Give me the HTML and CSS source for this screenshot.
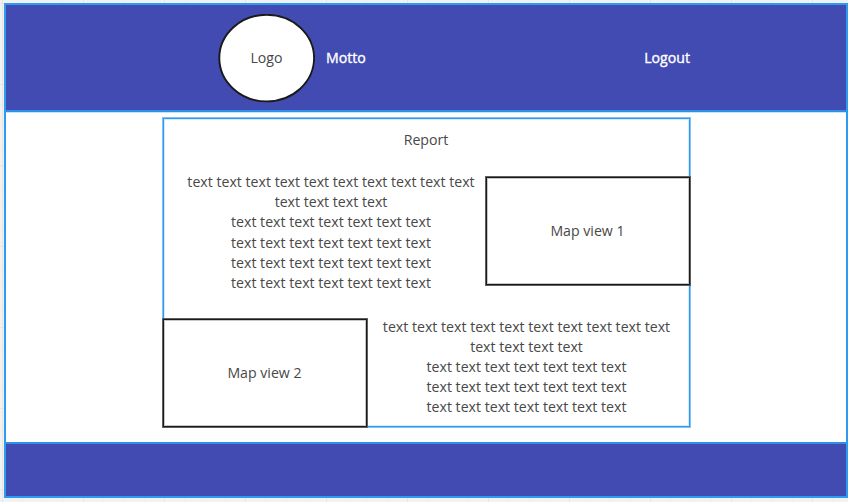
FILE: index.html
```html
<!DOCTYPE html>
<html lang="en">
<head>
<meta charset="utf-8">
<title>Report</title>
<link rel="stylesheet" href="styles.css">
</head>
<body>
<div class="frame">
  <header class="header">
    <div class="logo">
      <svg class="logo-shape" viewBox="0 0 97 89"><ellipse cx="48.7" cy="44.1" rx="47.4" ry="43.3"/></svg>
      <span>Logo</span>
    </div>
    <span class="motto">Motto</span>
    <a class="logout">Logout</a>
  </header>
  <main class="content">
    <section class="report">
      <h1 class="title">Report</h1>
      <div class="row row-first">
        <p class="copy">text text text text text text text text text text<br>text text text text<br>text text text text text text text<br>text text text text text text text<br>text text text text text text text<br>text text text text text text text</p>
        <div class="map">Map view 1</div>
      </div>
      <div class="row row-second">
        <div class="map">Map view 2</div>
        <p class="copy">text text text text text text text text text text<br>text text text text<br>text text text text text text text<br>text text text text text text text<br>text text text text text text text</p>
      </div>
    </section>
  </main>
  <footer class="footer"></footer>
</div>
</body>
</html>
```
FILE: styles.css
```css
* { box-sizing: border-box; }

body {
  margin: 0;
  height: 502px;
  padding: 3px 0 0 4px;
  overflow: hidden;
  font: 14.15px/20.15px "Open Sans", sans-serif;
  color: #484848;
  background-color: #f2f2f2;
  background-image:
    linear-gradient(90deg, #e6e6e6 1px, transparent 1px),
    linear-gradient(#e6e6e6 1px, transparent 1px),
    linear-gradient(90deg, #eeeeee 1px, transparent 1px),
    linear-gradient(#eeeeee 1px, transparent 1px);
  background-size: 81px 81px, 81px 81px, 20.25px 20.25px, 20.25px 20.25px;
  background-position: 2px 3px;
}

.frame {
  display: flex;
  flex-direction: column;
  width: 844px;
  height: 495px;
  border: 2px solid #2d9bf0;
  background: #fff;
}

.header {
  display: flex;
  align-items: center;
  height: 107px;
  padding: 2px 156px 0 212px;
  border-bottom: 2px solid #2d8fe5;
  background: #414bb2;
  box-shadow: 0 1px #c4e4fb;
  color: #fff;
}

.logo {
  display: grid;
  place-items: center;
  width: 97px;
  height: 89px;
  color: #484848;
}

.logo > * { grid-area: 1 / 1; }

.logo-shape {
  width: 97px;
  height: 89px;
  fill: #fff;
  stroke: #1a1a1a;
  stroke-width: 1.9;
}

.motto,
.logout {
  -webkit-text-stroke: 0.35px #fff;
}

.motto { margin-left: 11px; }

.logout { margin-left: auto; }

.content {
  flex: 1;
  padding: 5px 0 0 156px;
}

.report {
  width: 529px;
  height: 311px;
  box-shadow:
    inset 0 0 0 1px #7fc1f7,
    inset 0 0 0 2px #2d9bf0,
    inset 0 0 0 3px #d5ebfc;
}

.title {
  margin: 0;
  height: 59px;
  padding: 13px 1px 0 0;
  font: inherit;
  text-align: center;
}

.row { display: flex; }

.row-first {
  height: 142px;
  padding-left: 15px;
}

.copy {
  margin: 0;
  text-align: center;
  white-space: nowrap;
}

.row-first .copy {
  width: 308px;
  margin-top: -3.98px;
}

.row-second .copy {
  width: 317px;
  margin-top: -1.5px;
}

.map {
  display: grid;
  place-items: center;
  width: 206px;
  height: 110px;
  padding: 1px 1px 0 0;
  background: #fff;
  box-shadow:
    inset 0 0 0 1px #5c5f62,
    inset 0 0 0 2px #1a1a1a,
    inset 0 0 0 3px #c8c8c8;
}

.footer {
  height: 54px;
  border-top: 2px solid #2d8fe5;
  background: #414bb2;
}
```
